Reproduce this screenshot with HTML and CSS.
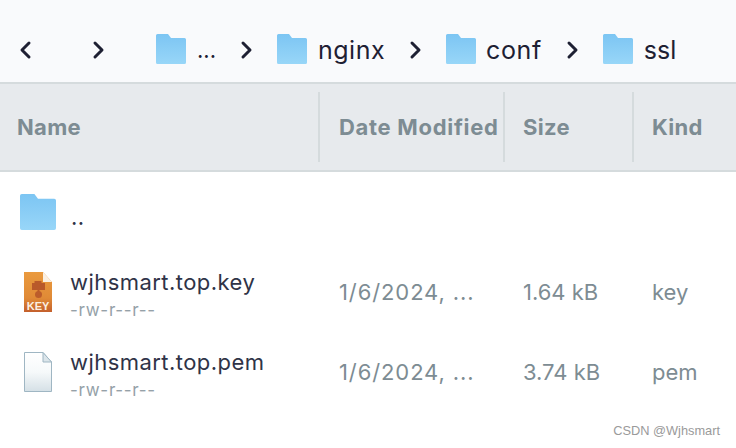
FILE: index.html
```html
<!DOCTYPE html>
<html lang="en">
<head>
  <meta charset="UTF-8">
  <title>ssl</title>
  <link rel="stylesheet" href="styles.css">
</head>
<body>
  <svg class="defs" width="0" height="0">
    <defs>
      <linearGradient id="folder-fill" x1="0" y1="0" x2="0" y2="1">
        <stop offset="0" stop-color="#7cc5f3"/>
        <stop offset="1" stop-color="#98d6f8"/>
      </linearGradient>
      <linearGradient id="key-fill" x1="0" y1="0" x2="0" y2="1">
        <stop offset="0" stop-color="#ea9a3e"/>
        <stop offset="0.65" stop-color="#e08a36"/>
        <stop offset="1" stop-color="#c4602c"/>
      </linearGradient>
      <linearGradient id="doc-fill" x1="0" y1="0" x2="0" y2="1">
        <stop offset="0" stop-color="#ffffff"/>
        <stop offset="0.5" stop-color="#f6f9fa"/>
        <stop offset="1" stop-color="#d5e0e6"/>
      </linearGradient>
      <symbol id="folder" viewBox="0 0 30 30">
        <path d="M0 1.5A1.5 1.5 0 0 1 1.500 0H12l3 4h13.500A1.500 1.500 0 0 1 30 5.500V28.500A1.500 1.500 0 0 1 28.500 30H1.500A1.500 1.500 0 0 1 0 28.500Z" fill="url(#folder-fill)"/>
      </symbol>
    </defs>
  </svg>

  <div class="toolbar">
    <svg class="chevron back" viewBox="0 0 14 20"><path d="M11 3L4 10l7 7"/></svg>
    <svg class="chevron forward" viewBox="0 0 14 20"><path d="M3 3l7 7-7 7"/></svg>
    <div class="crumbs">
      <svg class="folder"><use href="#folder"/></svg>
      <span class="crumb-name dots">...</span>
      <svg class="chevron" viewBox="0 0 14 20"><path d="M3 3l7 7-7 7"/></svg>
      <svg class="folder"><use href="#folder"/></svg>
      <span class="crumb-name">nginx</span>
      <svg class="chevron" viewBox="0 0 14 20"><path d="M3 3l7 7-7 7"/></svg>
      <svg class="folder"><use href="#folder"/></svg>
      <span class="crumb-name conf">conf</span>
      <svg class="chevron" viewBox="0 0 14 20"><path d="M3 3l7 7-7 7"/></svg>
      <svg class="folder"><use href="#folder"/></svg>
      <span class="crumb-name ssl">ssl</span>
    </div>
  </div>

  <div class="table-head row-grid">
    <div class="th">Name</div>
    <div class="th sep date-head">Date Modified</div>
    <div class="th sep">Size</div>
    <div class="th sep">Kind</div>
  </div>

  <div class="file-row row-grid">
    <div class="name-cell">
      <svg class="row-folder"><use href="#folder"/></svg>
      <div class="file-title up">..</div>
    </div>
  </div>

  <div class="file-row row-grid">
    <div class="name-cell">
      <svg class="file-icon" viewBox="0 0 28 40">
        <path d="M0 0H19L28 10V40H0Z" fill="url(#key-fill)"/>
        <path d="M19 0L28 10H19Z" fill="#fbf0e2"/>
        <path d="M8 11h2.500V9h7v2H21v7H8Z" fill="#b9592a"/>
        <path d="M13.500 18h2v2h-2Z" fill="#b9592a"/>
        <circle cx="14.500" cy="22.500" r="3.500" fill="#bb5c2b"/>
        <text class="key-label" x="14" y="37.500">KEY</text>
      </svg>
      <div class="file-text">
        <div class="file-title">wjhsmart.top.key</div>
        <div class="perms">-rw-r--r--</div>
      </div>
    </div>
    <div class="td date">1/6/2024, ...</div>
    <div class="td">1.64 kB</div>
    <div class="td">key</div>
  </div>

  <div class="file-row row-grid">
    <div class="name-cell">
      <svg class="file-icon" viewBox="0 0 28 40">
        <path d="M.5.500H19L27.500 10V39.500H.5Z" fill="url(#doc-fill)" stroke="#9fb6c3"/>
        <path d="M19 .5V10H27.500Z" fill="#dbe5ea" stroke="#9fb6c3"/>
      </svg>
      <div class="file-text">
        <div class="file-title">wjhsmart.top.pem</div>
        <div class="perms">-rw-r--r--</div>
      </div>
    </div>
    <div class="td date">1/6/2024, ...</div>
    <div class="td">3.74 kB</div>
    <div class="td">pem</div>
  </div>

  <div class="watermark">CSDN @Wjhsmart</div>
</body>
</html>
```

FILE: styles.css
```css
/* General */
body {
  margin: 0;
  position: relative;
  overflow: hidden;
  width: 736px;
  height: 448px;
  background-color: #fff;
  font-family: Inter, "Noto Sans", sans-serif;
  color: #2c3040;
}

.defs {
  position: absolute;
}

/* Toolbar */
.toolbar {
  height: 84px;
  box-sizing: border-box;
  padding: 34px 0 0 18px;
  display: flex;
  align-items: flex-start;
  background-color: #f9fafc;
  border-bottom: 2px solid #d5dbdd;
}

.chevron {
  width: 14px;
  height: 20px;
  flex: none;
  fill: none;
  stroke: #1e2033;
  stroke-width: 3;
  stroke-linecap: round;
  stroke-linejoin: round;
}

.back {
  margin-top: 6px;
}

.forward {
  margin: 6px 0 0 60px;
}

.crumbs {
  display: flex;
  align-items: center;
  margin-left: 50px;
  height: 30px;
}

.crumbs .chevron {
  margin: 2px 23px 0 24px;
}

.folder {
  width: 30px;
  height: 30px;
  flex: none;
}

.crumb-name {
  margin: 2px 0 0 11px;
  font-size: 25px;
  letter-spacing: .5px;
  color: #1e2033;
  white-space: nowrap;
}

.crumb-name.conf {
  margin-left: 10px;
  letter-spacing: .6px;
}

.crumb-name.ssl {
  letter-spacing: 0;
}

.dots {
  font-size: 22px;
  letter-spacing: 0;
}

/* Columns */
.row-grid {
  display: grid;
  grid-template-columns: 318px 185px 129px 104px;
}

.table-head {
  height: 88px;
  box-sizing: border-box;
  padding: 8px 0;
  background-color: #e7eaed;
  border-bottom: 2px solid #d5dbdd;
}

.th {
  display: flex;
  align-items: center;
  padding-left: 17px;
  font-size: 22px;
  font-weight: 700;
  letter-spacing: .3px;
  color: #7d8c93;
  white-space: nowrap;
  height: 70px;
}

.th.sep {
  border-left: 2px solid #d5dbdd;
  padding-left: 18px;
}

.th.date-head {
  padding-left: 19px;
  letter-spacing: .7px;
}

/* File rows */
.file-row {
  height: 80px;
  align-items: center;
}

.name-cell {
  display: flex;
  align-items: center;
  padding-left: 20px;
}

.row-folder {
  width: 36px;
  height: 36px;
  flex: none;
  margin-right: 15px;
}

.file-icon {
  width: 28px;
  height: 40px;
  flex: none;
  margin: 0 18px 0 4px;
}

.key-label {
  font-family: "Liberation Sans", sans-serif;
  font-size: 11px;
  font-weight: 700;
  fill: #fbf0e2;
  text-anchor: middle;
}

.file-text {
  margin-top: 6px;
}

.file-title {
  font-size: 22px;
  line-height: 28px;
  letter-spacing: .45px;
  color: #2f3347;
  white-space: nowrap;
}

.up {
  margin-top: 10px;
}

.perms {
  margin-top: 2px;
  font-size: 17px;
  line-height: 24px;
  letter-spacing: .7px;
  color: #95a1a8;
}

.td {
  font-size: 22px;
  color: #7d8c93;
  padding-left: 20px;
  white-space: nowrap;
}

.td.date {
  padding-left: 21px;
  letter-spacing: .9px;
}

/* Watermark */
.watermark {
  position: absolute;
  right: 16px;
  top: 423px;
  font-family: "Liberation Sans", sans-serif;
  font-size: 12.800px;
  color: #9a9a9a;
}
```
